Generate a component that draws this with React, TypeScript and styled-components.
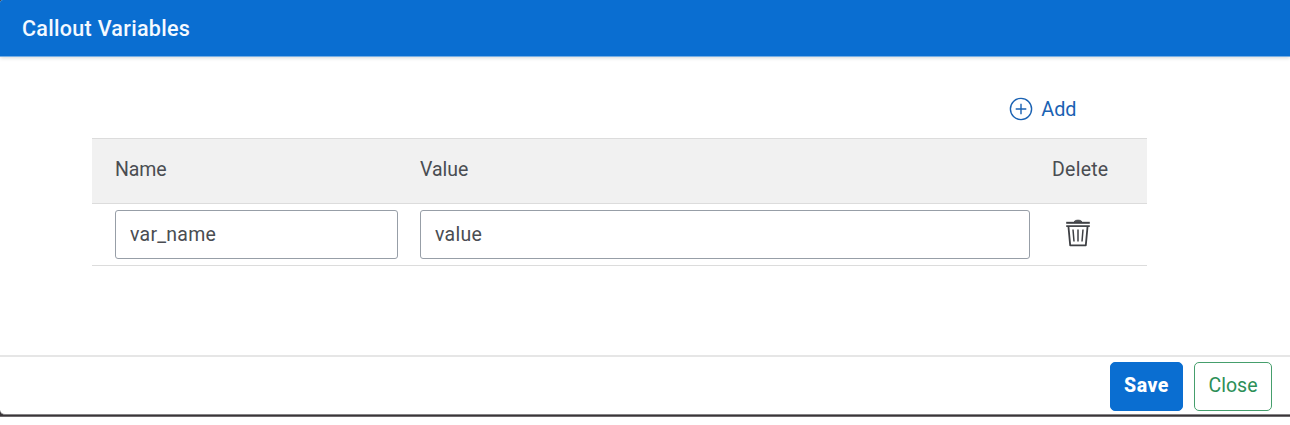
import React, { useState } from "react";
import styled, { createGlobalStyle } from "styled-components";

const GlobalStyle = createGlobalStyle`
  * { box-sizing: border-box; }
  body { margin: 0; background: #fff; font-family: Roboto, "Liberation Sans", sans-serif; color: #4a4d52; }
`;

const Backdrop = styled.div`
  height: 417px;
  background: #393538;
  border-bottom: 1px solid #6d696c;
`;

const Dialog = styled.section`
  display: flex;
  flex-direction: column;
  height: 415px;
  background: #fff;
  border-bottom: 1px solid #858385;
  border-radius: 3px 0 0 5px;
  overflow: hidden;
`;

const Header = styled.header`
  flex: none;
  height: 57px;
  padding: 0 22px;
  background: #0a6ed1;
  border-bottom: 1px solid #76aee4;
  box-shadow: 0 1px 4px rgba(0, 0, 0, 0.16);
`;

const Title = styled.h1`
  margin: 0;
  font-size: 21.5px;
  line-height: 57px;
  font-weight: 500;
  letter-spacing: 0.3px;
  color: #f4f9ff;
`;

const Content = styled.main`
  flex: 1;
  padding: 31px 143px 0 92px;
`;

const Toolbar = styled.div`
  display: flex;
  justify-content: flex-end;
  height: 50px;
  padding-right: 70.5px;
`;

const AddButton = styled.button`
  display: flex;
  align-items: center;
  gap: 8px;
  height: 42px;
  padding: 0;
  border: 0;
  background: none;
  font: 400 19.8px Roboto, sans-serif;
  color: #1a62b3;
`;

const Row = styled.div<{ $head?: boolean }>`
  display: grid;
  grid-template-columns: 283px 610px 94px;
  column-gap: 22px;
  align-items: center;
  height: ${(p) => (p.$head ? 66 : 62)}px;
  padding-left: 23px;
  background: ${(p) => (p.$head ? "#f1f1f1" : "#fff")};
  border-top: ${(p) => (p.$head ? "1px solid #dcdcdc" : "0")};
  border-bottom: 1px solid #dcdcdc;
`;

const Label = styled.span<{ $track?: number }>`
  font-size: 19.5px;
  line-height: 24px;
  padding-bottom: 3px;
  letter-spacing: ${(p) => p.$track ?? 0}px;
`;

const Field = styled.input<{ $track?: number }>`
  width: 100%;
  height: 49px;
  padding: 0 14px 1px;
  border: 1px solid #979ea7;
  border-radius: 3px;
  outline: 0;
  background: #fff;
  color: #4a4d52;
  font: 400 19.5px Roboto, sans-serif;
  letter-spacing: ${(p) => p.$track ?? 0}px;
`;

const DeleteButton = styled.button`
  display: flex;
  width: 26px;
  margin: 0 0 3px 12.5px;
  padding: 0;
  border: 0;
  background: none;
`;

const Footer = styled.footer`
  display: flex;
  justify-content: flex-end;
  gap: 11px;
  flex: none;
  height: 59px;
  padding: 5px 18px 0 0;
  border-top: 2px solid #e6e6e6;
`;

const Action = styled.button<{ $primary?: boolean }>`
  width: ${(p) => (p.$primary ? 73 : 78)}px;
  height: 49px;
  padding: 0 0 3px;
  border: 1px solid ${(p) => (p.$primary ? "#0a6ed1" : "#459e6c")};
  border-radius: 5px;
  background: ${(p) => (p.$primary ? "#0a6ed1" : "#fff")};
  color: ${(p) => (p.$primary ? "#fff" : "#2d8f57")};
  font: ${(p) => (p.$primary ? 800 : 400)} 19.5px Roboto, sans-serif;
  letter-spacing: ${(p) => (p.$primary ? 0.5 : 0)}px;
`;

const PlusIcon = () => (
  <svg width="24" height="24" viewBox="0 0 24 24" fill="none" stroke="#1a62b3" strokeWidth="1.4">
    <circle cx="12" cy="12" r="10.6" />
    <path d="M12 6.7v10.6M6.7 12h10.6" />
  </svg>
);

const TrashIcon = () => (
  <svg width="26" height="28" viewBox="0 0 26 28" fill="none" stroke="#3e4044">
    <path d="M9 2.8Q10 1.2 12 1.2h2q2 0 3 1.6z" fill="#3e4044" strokeWidth="0.8" />
    <path d="M1.2 3.8h23.6" strokeWidth="2" />
    <path d="M1.2 7.1h23.6" strokeWidth="1.7" />
    <path d="M3.4 7l1.8 19.4h15.6L22.6 7" strokeWidth="1.8" strokeLinejoin="round" />
    <path d="M8 10.5l1 12M13 10.5v12M18 10.5l-1 12" strokeWidth="1.5" />
  </svg>
);

export default function App() {
  const [name, setName] = useState("var_name");
  const [value, setValue] = useState("value");
  return (
    <>
      <GlobalStyle />
      <Backdrop>
        <Dialog>
          <Header>
            <Title>Callout Variables</Title>
          </Header>
          <Content>
            <Toolbar>
              <AddButton><PlusIcon />Add</AddButton>
            </Toolbar>
            <Row $head>
              <Label $track={-0.1}>Name</Label>
              <Label>Value</Label>
              <Label $track={0.25}>Delete</Label>
            </Row>
            <Row>
              <Field $track={0.25} aria-label="Name" value={name} onChange={(e) => setName(e.target.value)} />
              <Field $track={0.25} aria-label="Value" value={value} onChange={(e) => setValue(e.target.value)} />
              <DeleteButton aria-label="Delete"><TrashIcon /></DeleteButton>
            </Row>
          </Content>
          <Footer>
            <Action $primary>Save</Action>
            <Action>Close</Action>
          </Footer>
        </Dialog>
      </Backdrop>
    </>
  );
}
